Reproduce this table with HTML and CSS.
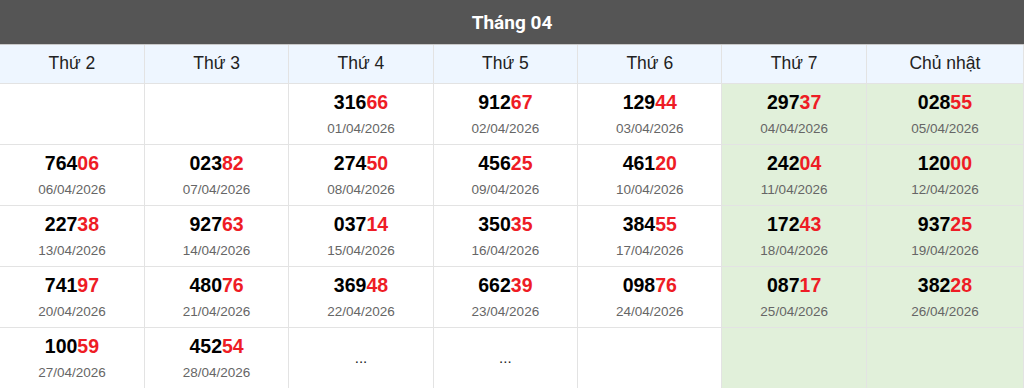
FILE: index.html
```html
<!DOCTYPE html>
<html lang="vi">
<head>
<meta charset="utf-8">
<title>Tháng 04</title>
<link rel="stylesheet" href="styles.css">
</head>
<body>
<div class="cal">
  <div class="cal-title">Tháng 04</div>
  <table class="cal-table">
    <colgroup>
      <col class="c"><col class="c"><col class="c"><col class="c"><col class="c"><col class="c"><col class="c-last">
    </colgroup>
    <thead>
      <tr><th>Thứ 2</th><th>Thứ 3</th><th>Thứ 4</th><th>Thứ 5</th><th>Thứ 6</th><th>Thứ 7</th><th>Chủ nhật</th></tr>
    </thead>
    <tbody>
      <tr>
        <td></td><td></td>
        <td><div class="num">316<span>66</span></div><div class="date">01/04/2026</div></td>
        <td><div class="num">912<span>67</span></div><div class="date">02/04/2026</div></td>
        <td><div class="num">129<span>44</span></div><div class="date">03/04/2026</div></td>
        <td class="we"><div class="num">297<span>37</span></div><div class="date">04/04/2026</div></td>
        <td class="we"><div class="num">028<span>55</span></div><div class="date">05/04/2026</div></td>
      </tr>
      <tr>
        <td><div class="num">764<span>06</span></div><div class="date">06/04/2026</div></td>
        <td><div class="num">023<span>82</span></div><div class="date">07/04/2026</div></td>
        <td><div class="num">274<span>50</span></div><div class="date">08/04/2026</div></td>
        <td><div class="num">456<span>25</span></div><div class="date">09/04/2026</div></td>
        <td><div class="num">461<span>20</span></div><div class="date">10/04/2026</div></td>
        <td class="we"><div class="num">242<span>04</span></div><div class="date">11/04/2026</div></td>
        <td class="we"><div class="num">120<span>00</span></div><div class="date">12/04/2026</div></td>
      </tr>
      <tr>
        <td><div class="num">227<span>38</span></div><div class="date">13/04/2026</div></td>
        <td><div class="num">927<span>63</span></div><div class="date">14/04/2026</div></td>
        <td><div class="num">037<span>14</span></div><div class="date">15/04/2026</div></td>
        <td><div class="num">350<span>35</span></div><div class="date">16/04/2026</div></td>
        <td><div class="num">384<span>55</span></div><div class="date">17/04/2026</div></td>
        <td class="we"><div class="num">172<span>43</span></div><div class="date">18/04/2026</div></td>
        <td class="we"><div class="num">937<span>25</span></div><div class="date">19/04/2026</div></td>
      </tr>
      <tr>
        <td><div class="num">741<span>97</span></div><div class="date">20/04/2026</div></td>
        <td><div class="num">480<span>76</span></div><div class="date">21/04/2026</div></td>
        <td><div class="num">369<span>48</span></div><div class="date">22/04/2026</div></td>
        <td><div class="num">662<span>39</span></div><div class="date">23/04/2026</div></td>
        <td><div class="num">098<span>76</span></div><div class="date">24/04/2026</div></td>
        <td class="we"><div class="num">087<span>17</span></div><div class="date">25/04/2026</div></td>
        <td class="we"><div class="num">382<span>28</span></div><div class="date">26/04/2026</div></td>
      </tr>
      <tr>
        <td><div class="num">100<span>59</span></div><div class="date">27/04/2026</div></td>
        <td><div class="num">452<span>54</span></div><div class="date">28/04/2026</div></td>
        <td class="dots">...</td>
        <td class="dots">...</td>
        <td></td>
        <td class="we"></td>
        <td class="we"></td>
      </tr>
    </tbody>
  </table>
</div>
</body>
</html>
```
FILE: styles.css
```css
* { box-sizing: border-box; }
html, body { margin: 0; padding: 0; background: #fff; }
body { font-family: "Liberation Sans", Arial, sans-serif; }

.cal { width: 1024px; }

.cal-title {
  height: 45px;
  background: #555555;
  color: #fff;
  font-family: Roboto, "Liberation Sans", sans-serif;
  font-weight: 700;
  font-size: 19px;
  display: flex;
  align-items: center;
  justify-content: center;
  border-bottom: 1px solid #c9c9c9;
}

.cal-table {
  width: 1024px;
  border-collapse: collapse;
  table-layout: fixed;
}
.cal-table col.c { width: 144.4px; }

.cal-table th {
  background: #eef6ff;
  font-weight: 400;
  font-size: 17.5px;
  color: #222;
  height: 38px;
  border: 1px solid #e3e3e3;
  border-top: none;
  padding: 0;
  text-align: center;
}

.cal-table td {
  border: 1px solid #e3e3e3;
  height: 61px;
  padding: 0;
  text-align: center;
  vertical-align: top;
}
.cal-table tr > :first-child { border-left: none; }

.cal-table td.we { background: #e1f0da; }

.num {
  font-weight: 700;
  font-size: 19.5px;
  color: #000;
  line-height: 22px;
  margin-top: 7px;
}
.num span { color: #ee1c25; }

.date {
  font-size: 13.5px;
  color: #666;
  line-height: 16px;
  margin-top: 8px;
}

.cal-table td.dots {
  vertical-align: middle;
  font-size: 15px;
  color: #222;
}
```
